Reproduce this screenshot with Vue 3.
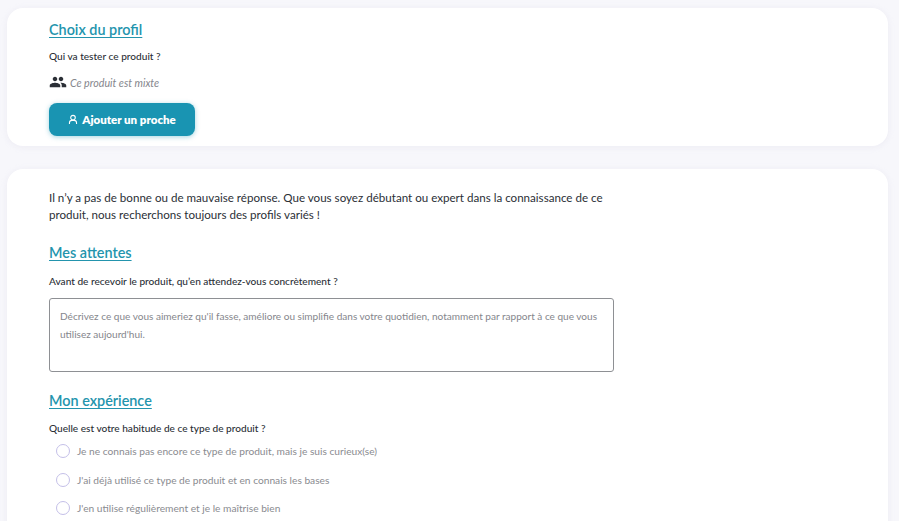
<script setup>
const options = [
  'Je ne connais pas encore ce type de produit, mais je suis curieux(se)',
  "J'ai déjà utilisé ce type de produit et en connais les bases",
  "J'en utilise régulièrement et je le maîtrise bien"
]
</script>

<template>
  <main class="page">
    <section class="card card-top">
      <h2 class="title">Choix du profil</h2>
      <p class="label first-label">Qui va tester ce produit ?</p>
      <div class="mixed">
        <svg class="people" viewBox="0 0 24 24" width="18" height="18" aria-hidden="true">
          <path fill="#2b2f36" d="M16 11c1.66 0 2.99-1.34 2.99-3S17.66 5 16 5s-3 1.34-3 3 1.34 3 3 3zm-8 0c1.66 0 2.99-1.34 2.99-3S9.66 5 8 5 5 6.34 5 8s1.34 3 3 3zm0 2c-2.33 0-7 1.17-7 3.5V19h14v-2.5C15 14.17 10.33 13 8 13zm8 0c-.29 0-.62.02-.97.05 1.16.84 1.97 1.97 1.97 3.45V19h6v-2.5c0-2.33-4.67-3.5-7-3.5z"/>
        </svg>
        <em>Ce produit est mixte</em>
      </div>
      <button class="add" type="button">
        <svg viewBox="0 0 24 24" width="10" height="11" fill="none" stroke="#fff" stroke-width="2.6" aria-hidden="true">
          <circle cx="12" cy="7.5" r="5.5"/>
          <path d="M3.5 23v-3a6 6 0 0 1 6-6h5a6 6 0 0 1 6 6v3"/>
        </svg>
        Ajouter un proche
      </button>
    </section>

    <section class="card card-main">
      <p class="intro">Il n’y a pas de bonne ou de mauvaise réponse. Que vous soyez débutant ou expert dans la connaissance de ce produit, nous recherchons toujours des profils variés !</p>

      <h2 class="title expect">Mes attentes</h2>
      <p class="label">Avant de recevoir le produit, qu’en attendez-vous concrètement ?</p>
      <textarea class="area" placeholder="Décrivez ce que vous aimeriez qu'il fasse, améliore ou simplifie dans votre quotidien, notamment par rapport à ce que vous utilisez aujourd'hui."></textarea>

      <h2 class="title exp">Mon expérience</h2>
      <p class="label">Quelle est votre habitude de ce type de produit ?</p>
      <ul class="options">
        <li v-for="o in options" :key="o"><span class="radio"></span>{{ o }}</li>
      </ul>
    </section>
  </main>
</template>

<style scoped>
.page {
  height: 521px;
  overflow: hidden;
  box-sizing: border-box;
  padding: 8px 11px 0 7px;
  background: #f7f7fb;
  font-family: Lato, "Noto Sans", sans-serif;
  color: #2b2f36;
  display: flex;
  flex-direction: column;
  gap: 23px;
}
.card {
  background: #fff;
  border-radius: 16px;
  box-sizing: border-box;
  padding-left: 42px;
  flex: none;
  box-shadow: 0 1px 6px rgba(225, 222, 235, 0.45);
}
.card-top { height: 138px; padding-top: 13px; }
.card-main { height: 400px; padding-top: 20px; }
.title {
  margin: 0;
  font-size: 14.4px;
  line-height: 18px;
  font-weight: 600;
  color: #2394ad;
  text-decoration: underline;
  text-decoration-thickness: 1px;
  text-underline-offset: 2px;
}
.label {
  margin: 0;
  font-size: 10.1px;
  line-height: 14px;
  font-weight: 500;
  color: #2b2f36;
}
.first-label { margin-top: 10px; }
.mixed {
  display: flex;
  align-items: center;
  gap: 3px;
  margin-top: 10px;
  height: 18px;
  font-size: 10.7px;
  color: #85868c;
}
.add {
  display: flex;
  align-items: center;
  justify-content: center;
  gap: 4px;
  margin-top: 12px;
  width: 146px;
  height: 33px;
  border: 0;
  border-radius: 8px;
  background: #1994b2;
  color: #fff;
  font: 800 11.5px Lato, "Noto Sans", sans-serif;
  box-shadow: 0 1px 5px rgba(25, 148, 178, 0.4);
}
.intro {
  margin: 0;
  width: 565px;
  font-size: 11.6px;
  line-height: 17px;
  color: #2b2f36;
}
.expect { margin-top: 21px; }
.expect + .label { margin-top: 12px; }
.area {
  display: block;
  box-sizing: border-box;
  width: 565px;
  height: 74px;
  margin-top: 10px;
  padding: 9px 10px;
  border: 1px solid #8e9094;
  border-radius: 3px;
  resize: none;
  background: #fff;
  font: 10.05px/17.5px Lato, "Noto Sans", sans-serif;
  outline: none;
}
.area::placeholder { color: #85868c; opacity: 1; }
.exp { margin-top: 20px; }
.exp + .label { margin-top: 11px; }
.options {
  list-style: none;
  margin: 2px 0 0;
  padding: 0 0 0 7px;
}
.options li {
  display: flex;
  align-items: center;
  gap: 7px;
  height: 28.5px;
  font-size: 10.2px;
  color: #8a8b90;
}
.radio {
  box-sizing: border-box;
  width: 14px;
  height: 14px;
  border: 1px solid #c4bfe8;
  border-radius: 50%;
  flex: none;
}
</style>

<style>
body { margin: 0; }
</style>
